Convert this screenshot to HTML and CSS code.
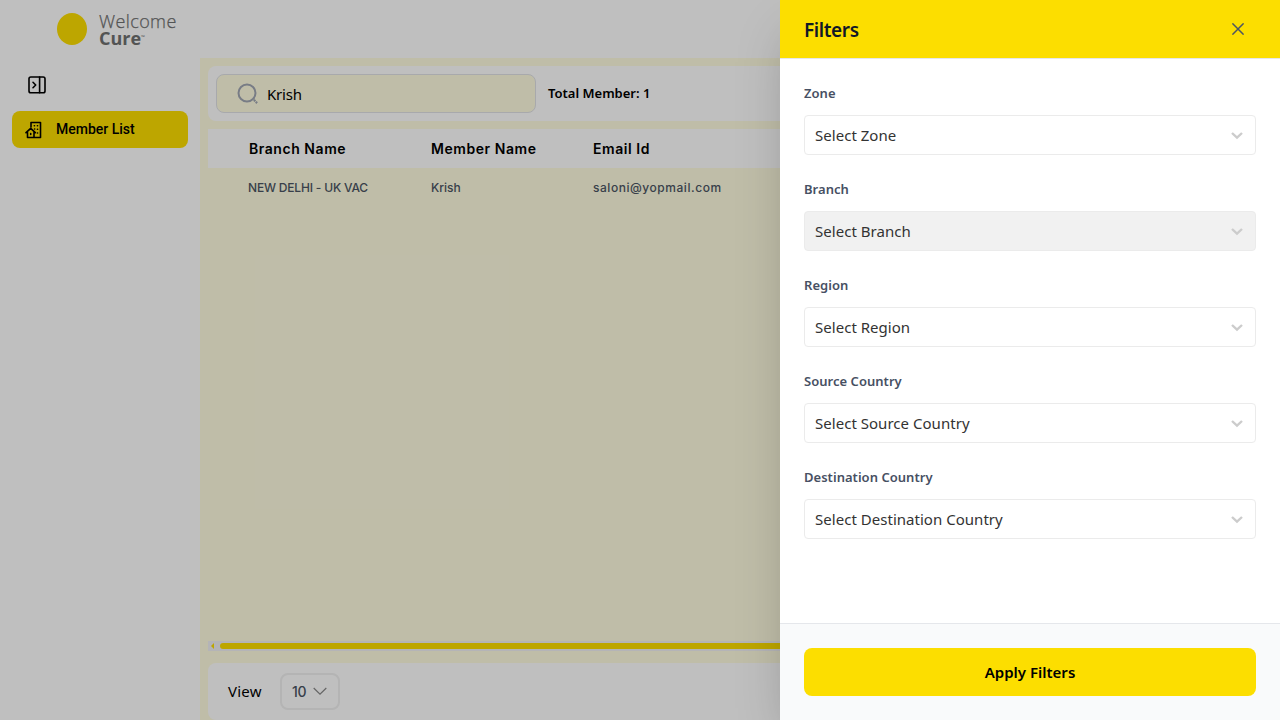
FILE: index.html
```html
<!DOCTYPE html>
<html lang="en">
<head>
<meta charset="utf-8">
<title>Member List</title>
<link rel="stylesheet" href="styles.css">
</head>
<body>
<div class="app">
  <header class="topbar">
    <div class="logo-dot"></div>
    <div class="logo-text">
      <div class="logo-welcome">Welcome</div>
      <div class="logo-cure">Cure<span class="logo-tm">™</span></div>
    </div>
  </header>
  <div class="body">
    <nav class="sidebar">
      <svg class="toggle" width="20" height="20" viewBox="0 0 20 20" fill="none" stroke="#000" stroke-width="1.6" stroke-linecap="round" stroke-linejoin="round"><rect x="2" y="2" width="16" height="15.7" rx="1.8"/><path d="M12.6 2v15.7M6 7.3l2.7 2.7L6 12.7"/></svg>
      <a class="nav-item">
        <svg width="18" height="18" viewBox="0 0 18 18" fill="none" stroke="#000" stroke-width="1.6" stroke-linecap="round" stroke-linejoin="round"><path d="M6 6V1.5h9.5v15H2.5v-5M1 11.7l4.7-4.4 4.6 4.4M9 11.4v5.1"/><path d="M5.7 12.6v.8M9.3 4.8h.2M12.4 4.8h.2M9.6 8h.1M12.4 8.2h.2M12.4 12h.2"/></svg>
        <span>Member List</span>
      </a>
    </nav>
    <main class="main">
      <section class="search-card">
        <div class="search">
          <svg width="22" height="22" viewBox="0 0 22 22" fill="none" stroke="#a0a6b2" stroke-width="2"><circle cx="10" cy="10" r="8.5"/><path d="M16.9 16.9l3.2 3.2" stroke-width="2.2" stroke-dasharray="2 .7"/></svg>
          <span class="search-value">Krish</span>
        </div>
        <span class="total">Total Member: 1</span>
      </section>
      <section class="table">
        <div class="row head"><span>Branch Name</span><span>Member Name</span><span>Email Id</span></div>
        <div class="row data"><span class="caps">NEW DELHI - UK VAC</span><span>Krish</span><span class="email">saloni@yopmail.com</span></div>
        <div class="scroll"><i class="arrow"></i><i class="thumb"></i></div>
      </section>
      <footer class="pager">
        <span class="view">View</span>
        <div class="page-size"><span>10</span><svg width="14" height="9" viewBox="0 0 14 9" fill="none" stroke="#888" stroke-width="1.2"><path d="M.7 1l6.3 6.2L13.3 1"/></svg></div>
      </footer>
    </main>
  </div>
</div>
<div class="overlay"></div>
<aside class="drawer">
  <div class="drawer-head"><h2>Filters</h2><svg width="12" height="12" viewBox="0 0 12 12" fill="none" stroke="#4b5563" stroke-width="1.5"><path d="M.4.4l11.2 11.2M11.6.4L.4 11.6"/></svg></div>
  <div class="drawer-body">
    <div class="field"><label>Zone</label><div class="select"><span>Select Zone</span><svg class="chev" viewBox="0 0 20 20"><path d="M5 8l5 4.7L15 8"/></svg></div></div>
    <div class="field"><label>Branch</label><div class="select disabled"><span>Select Branch</span><svg class="chev" viewBox="0 0 20 20"><path d="M5 8l5 4.7L15 8"/></svg></div></div>
    <div class="field"><label>Region</label><div class="select"><span>Select Region</span><svg class="chev" viewBox="0 0 20 20"><path d="M5 8l5 4.7L15 8"/></svg></div></div>
    <div class="field"><label>Source Country</label><div class="select"><span>Select Source Country</span><svg class="chev" viewBox="0 0 20 20"><path d="M5 8l5 4.7L15 8"/></svg></div></div>
    <div class="field"><label>Destination Country</label><div class="select"><span>Select Destination Country</span><svg class="chev" viewBox="0 0 20 20"><path d="M5 8l5 4.7L15 8"/></svg></div></div>
  </div>
  <div class="drawer-foot"><button class="apply">Apply Filters</button></div>
</aside>
</body>
</html>
```
FILE: styles.css
```css
* { box-sizing: border-box; }
body { margin: 0; height: 720px; overflow: hidden; font-family: "Noto Sans", "Open Sans", sans-serif; color: #000; white-space: nowrap; }
.app { height: 720px; display: flex; flex-direction: column; background: #fff; }
.topbar { height: 58px; flex: none; display: flex; align-items: flex-start; padding: 13px 0 0 57px; }
.logo-dot { width: 30px; height: 32px; border-radius: 50%; background: #fcde00; }
.logo-text { margin-left: 12px; color: #6f7070; font-family: "Open Sans", sans-serif; }
.logo-welcome { font-size: 18px; line-height: 17px; font-weight: 300; letter-spacing: .4px; -webkit-text-stroke: .25px #6f7070; }
.logo-cure { font-size: 18px; line-height: 17px; font-weight: 700; }
.logo-tm { font-size: 5px; font-weight: 400; vertical-align: 6px; line-height: 1px; }
.body { flex: 1; display: flex; min-height: 0; }
.sidebar { width: 200px; flex: none; padding: 17px 12px 0; }
.toggle { display: block; margin-left: 15px; }
.nav-item { margin-top: 16px; height: 37px; border-radius: 8px; background: #fcde00; display: flex; align-items: center; padding-left: 13px; gap: 13px; font: 500 14px Roboto, sans-serif; }
.nav-item span { padding-bottom: 2px; }
.main { flex: 1; background: #fffce1; padding: 8px 8px 0; display: flex; flex-direction: column; min-width: 0; }
.search-card { height: 55px; flex: none; background: #fff; border-radius: 8px; display: flex; align-items: center; padding-left: 8px; gap: 12px; }
.search { width: 320px; height: 39px; border: 1px solid #e0e2e6; border-radius: 8px; background: #fffce1; display: flex; align-items: center; padding-left: 20px; gap: 8px; }
.search-value { font-size: 15px; letter-spacing: -.2px; }
.total { font-size: 13px; font-weight: 600; padding-bottom: 2px; }
.table { margin-top: 8px; flex: 1; display: flex; flex-direction: column; }
.row { display: grid; grid-template-columns: 182px 162px 1fr; align-items: center; padding-left: 41px; height: 39px; font-family: Inter, sans-serif; }
.head { background: #fff; font-size: 14px; font-weight: 600; letter-spacing: .55px; }
.data { font-size: 12px; font-weight: 500; color: #4b5563; padding-left: 40px; grid-template-columns: 183px 162px 1fr; }
.caps { letter-spacing: -.18px; }
.email { letter-spacing: .54px; }
.scroll { margin-top: auto; height: 10px; background: #f0f1f5; display: flex; align-items: center; padding-left: 3px; }
.arrow { border: 3px solid transparent; border-right-color: #fcde00; border-left: 0; }
.thumb { margin-left: 6px; flex: 1; height: 6px; border-radius: 3px; background: #fcde00; }
.pager { margin-top: 12px; height: 57px; flex: none; background: #fff; border-radius: 8px; display: flex; align-items: center; padding-left: 20px; }
.view { width: 52px; font-size: 15px; letter-spacing: .25px; padding-bottom: 2px; }
.page-size { width: 60px; height: 37px; border: 2px solid #f0f0f0; border-radius: 8px; display: flex; align-items: center; padding-left: 10px; gap: 7px; font: 500 14px Inter, sans-serif; letter-spacing: -.3px; color: #4b5563; }
.overlay { position: absolute; inset: 0; background: rgba(0,0,0,.25); }
.drawer { position: absolute; top: 0; right: 0; width: 500px; height: 720px; background: #fff; display: flex; flex-direction: column; box-shadow: 0 25px 50px -12px rgba(0,0,0,.25); }
.drawer-head { height: 59px; flex: none; background: #fcde00; border-bottom: 1px solid #e5e7eb; display: flex; align-items: center; justify-content: space-between; padding: 0 36px 0 24px; }
h2 { margin: 2px 0 0; font-size: 19px; line-height: 28px; font-weight: 600; letter-spacing: -.4px; color: #111827; }
.drawer-body { flex: 1; padding: 24px; display: flex; flex-direction: column; gap: 24px; }
.field { height: 72px; display: flex; flex-direction: column; justify-content: space-between; }
label { font-size: 13px; line-height: 20px; font-weight: 600; letter-spacing: .03px; color: #475063; }
.select { height: 40px; border: 1px solid #ebebeb; border-radius: 4px; display: flex; align-items: center; justify-content: space-between; padding: 0 8px 0 10px; font-size: 15px; letter-spacing: .03px; color: #333; }
.disabled { background: #f1f1f1; }
.chev { width: 20px; height: 20px; fill: none; stroke: #ccc; stroke-width: 2.4; }
.drawer-foot { height: 97px; flex: none; border-top: 1px solid #e5e7eb; background: #f9fafb; padding: 24px; }
.apply { width: 100%; height: 48px; border: 0; border-radius: 8px; background: #fcde00; font: 600 15px "Noto Sans", sans-serif; color: #000; }
```
